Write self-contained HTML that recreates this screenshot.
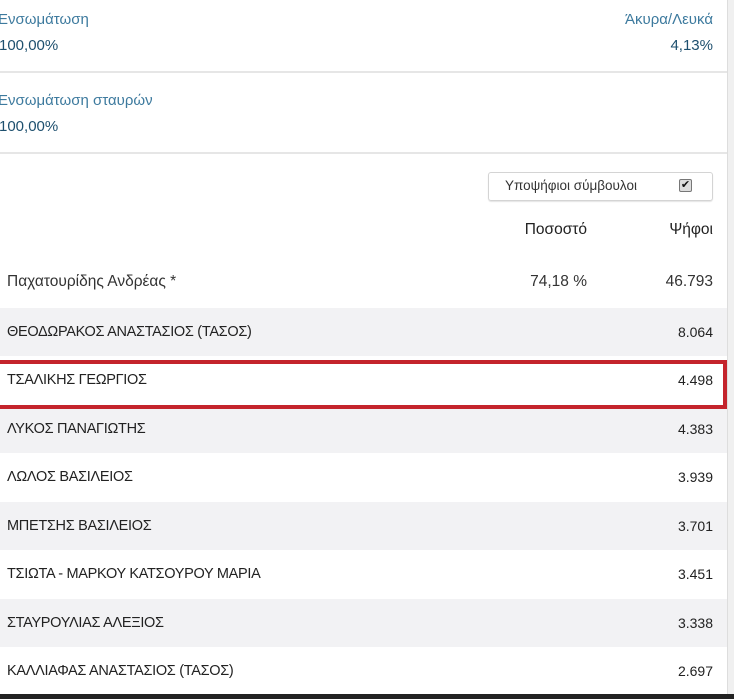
<!DOCTYPE html>
<html><head><meta charset="utf-8"><style>
*{margin:0;padding:0;box-sizing:border-box}
body{width:734px;height:699px;background:#fff;position:relative;overflow:hidden;font-family:"Liberation Sans","DejaVu Sans",sans-serif}
.a{position:absolute;white-space:nowrap}
.lbl{color:#3d7a9e;font-size:15px}
.val{color:#1d4f6e;font-size:15px}
.hr{position:absolute;left:0;width:727px;height:2px;background:#e6e6e6}
.row{position:absolute;left:0;width:727px;height:48px}
.g{background:#f2f2f4}
.nm{position:absolute;left:7px;top:16px;font-size:14.5px;color:#222;letter-spacing:-0.3px}
.nv{position:absolute;right:14px;top:16px;font-size:14px;color:#222}
</style></head><body>
<div class="a" style="left:727px;top:0;width:7px;height:699px;background:#f0f0f0;border-left:1px solid #ddd"></div>
<div class="a lbl" style="left:-2px;top:11px;">Ενσωμάτωση</div>
<div class="a val" style="left:-1px;top:37px;">100,00%</div>
<div class="a lbl" style="right:21px;top:11px;">Άκυρα/Λευκά</div>
<div class="a val" style="right:21px;top:37px;">4,13%</div>
<div class="hr" style="top:71px"></div>
<div class="a lbl" style="left:-2px;top:92px;">Ενσωμάτωση σταυρών</div>
<div class="a val" style="left:-1px;top:118px;">100,00%</div>
<div class="hr" style="top:152px"></div>
<div class="a" style="left:488px;top:172px;width:225px;height:29px;border:1px solid #d4d4d4;border-radius:3px;box-shadow:0 1px 1px #e4e4e4"></div>
<div class="a" style="left:505px;top:178px;font-size:13.5px;color:#333">Υποψήφιοι σύμβουλοι</div>
<div class="a" style="left:679px;top:179px;width:13px;height:13px;border:1px solid #777;border-radius:2px;background:#ddd;font-size:11px;line-height:11px;text-align:center;color:#111">✔</div>
<div class="a" style="right:147px;top:221px;font-size:15.5px;color:#222">Ποσοστό</div>
<div class="a" style="right:21px;top:221px;font-size:15.5px;color:#222">Ψήφοι</div>
<div class="a" style="left:7px;top:273px;font-size:15.5px;color:#333">Παχατουρίδης Ανδρέας *</div>
<div class="a" style="right:147px;top:273px;font-size:15.5px;color:#333">74,18 %</div>
<div class="a" style="right:21px;top:273px;font-size:15.5px;color:#333">46.793</div>

<div class="row g" style="top:308px"><span class="nm">ΘΕΟΔΩΡΑΚΟΣ ΑΝΑΣΤΑΣΙΟΣ (ΤΑΣΟΣ)</span><span class="nv">8.064</span></div>
<div class="row" style="top:356px"><span class="nm">ΤΣΑΛΙΚΗΣ ΓΕΩΡΓΙΟΣ</span><span class="nv">4.498</span></div>
<div class="row g" style="top:405px"><span class="nm">ΛΥΚΟΣ ΠΑΝΑΓΙΩΤΗΣ</span><span class="nv">4.383</span></div>
<div class="row" style="top:453px"><span class="nm">ΛΩΛΟΣ ΒΑΣΙΛΕΙΟΣ</span><span class="nv">3.939</span></div>
<div class="row g" style="top:502px"><span class="nm">ΜΠΕΤΣΗΣ ΒΑΣΙΛΕΙΟΣ</span><span class="nv">3.701</span></div>
<div class="row" style="top:550px"><span class="nm">ΤΣΙΩΤΑ - ΜΑΡΚΟΥ ΚΑΤΣΟΥΡΟΥ ΜΑΡΙΑ</span><span class="nv">3.451</span></div>
<div class="row g" style="top:599px"><span class="nm">ΣΤΑΥΡΟΥΛΙΑΣ ΑΛΕΞΙΟΣ</span><span class="nv">3.338</span></div>
<div class="row" style="top:647px"><span class="nm">ΚΑΛΛΙΑΦΑΣ ΑΝΑΣΤΑΣΙΟΣ (ΤΑΣΟΣ)</span><span class="nv">2.697</span></div>

<div class="a" style="left:-6px;top:360px;width:733px;height:49px;border:4px solid #c4242c"></div>
<div class="a" style="left:0;top:694px;width:734px;height:5px;background:#222"></div>
</body></html>
